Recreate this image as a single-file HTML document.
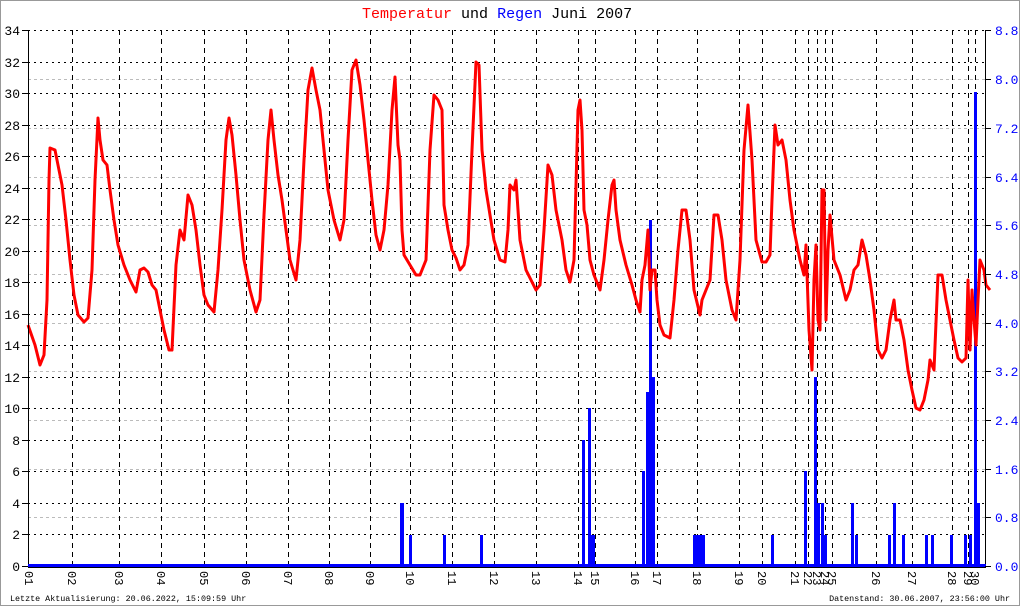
<!DOCTYPE html>
<html><head><meta charset="utf-8"><style>
html,body{margin:0;padding:0;background:#fff}
svg{display:block}
text{font-family:"Liberation Mono","DejaVu Sans Mono",monospace}
</style></head><body>
<svg width="1020" height="606" viewBox="0 0 1020 606" xmlns="http://www.w3.org/2000/svg">
<rect x="0.5" y="0.5" width="1019" height="605" fill="#fff" stroke="#999"/>
<text x="362" y="18" font-size="15" fill="#f00">Temperatur <tspan fill="#000">und</tspan> <tspan fill="#00f">Regen</tspan> <tspan fill="#000">Juni 2007</tspan></text>
<!-- gray rain grid -->
<g stroke="#bbb" stroke-dasharray="3,3" stroke-width="1">
<line x1="28" x2="985" y1="517.5" y2="517.5"/><line x1="28" x2="985" y1="469.5" y2="469.5"/><line x1="28" x2="985" y1="420.5" y2="420.5"/><line x1="28" x2="985" y1="371.5" y2="371.5"/><line x1="28" x2="985" y1="323.5" y2="323.5"/><line x1="28" x2="985" y1="274.5" y2="274.5"/><line x1="28" x2="985" y1="225.5" y2="225.5"/><line x1="28" x2="985" y1="177.5" y2="177.5"/><line x1="28" x2="985" y1="128.5" y2="128.5"/><line x1="28" x2="985" y1="79.5" y2="79.5"/>
</g>
<!-- black horizontal grid -->
<g stroke="#000" stroke-dasharray="2,4" stroke-width="1">
<line x1="28" x2="985" y1="30.5" y2="30.5"/><line x1="28" x2="985" y1="62.5" y2="62.5"/><line x1="28" x2="985" y1="93.5" y2="93.5"/><line x1="28" x2="985" y1="125.5" y2="125.5"/><line x1="28" x2="985" y1="156.5" y2="156.5"/><line x1="28" x2="985" y1="188.5" y2="188.5"/><line x1="28" x2="985" y1="219.5" y2="219.5"/><line x1="28" x2="985" y1="251.5" y2="251.5"/><line x1="28" x2="985" y1="282.5" y2="282.5"/><line x1="28" x2="985" y1="314.5" y2="314.5"/><line x1="28" x2="985" y1="345.5" y2="345.5"/><line x1="28" x2="985" y1="377.5" y2="377.5"/><line x1="28" x2="985" y1="408.5" y2="408.5"/><line x1="28" x2="985" y1="440.5" y2="440.5"/><line x1="28" x2="985" y1="471.5" y2="471.5"/><line x1="28" x2="985" y1="503.5" y2="503.5"/><line x1="28" x2="985" y1="534.5" y2="534.5"/>
</g>
<!-- vertical grid -->
<g stroke="#000" stroke-dasharray="5,4" stroke-width="1">
<line y1="30" y2="566" x1="72.5" x2="72.5"/><line y1="30" y2="566" x1="119.5" x2="119.5"/><line y1="30" y2="566" x1="161.5" x2="161.5"/><line y1="30" y2="566" x1="204.5" x2="204.5"/><line y1="30" y2="566" x1="246.5" x2="246.5"/><line y1="30" y2="566" x1="288.5" x2="288.5"/><line y1="30" y2="566" x1="329.5" x2="329.5"/><line y1="30" y2="566" x1="370.5" x2="370.5"/><line y1="30" y2="566" x1="410.5" x2="410.5"/><line y1="30" y2="566" x1="452.5" x2="452.5"/><line y1="30" y2="566" x1="494.5" x2="494.5"/><line y1="30" y2="566" x1="536.5" x2="536.5"/><line y1="30" y2="566" x1="578.5" x2="578.5"/><line y1="30" y2="566" x1="595.5" x2="595.5"/><line y1="30" y2="566" x1="635.5" x2="635.5"/><line y1="30" y2="566" x1="657.5" x2="657.5"/><line y1="30" y2="566" x1="697.5" x2="697.5"/><line y1="30" y2="566" x1="739.5" x2="739.5"/><line y1="30" y2="566" x1="762.5" x2="762.5"/><line y1="30" y2="566" x1="795.5" x2="795.5"/><line y1="30" y2="566" x1="808.5" x2="808.5"/><line y1="30" y2="566" x1="817.5" x2="817.5"/><line y1="30" y2="566" x1="825.5" x2="825.5"/><line y1="30" y2="566" x1="832.5" x2="832.5"/><line y1="30" y2="566" x1="876.5" x2="876.5"/><line y1="30" y2="566" x1="912.5" x2="912.5"/><line y1="30" y2="566" x1="952.5" x2="952.5"/><line y1="30" y2="566" x1="968.5" x2="968.5"/><line y1="30" y2="566" x1="975.5" x2="975.5"/>
</g>
<!-- rain bars -->
<g fill="#00f">
<rect x="400" y="503" width="4" height="63"/><rect x="409" y="535" width="3" height="31"/><rect x="443" y="535" width="3" height="31"/><rect x="480" y="535" width="3" height="31"/>
<rect x="582" y="440" width="3" height="126"/><rect x="588" y="408" width="3" height="158"/><rect x="591" y="535" width="4" height="31"/>
<rect x="642" y="471" width="3" height="95"/><rect x="646" y="392" width="3" height="174"/><rect x="649" y="220" width="3" height="346"/><rect x="652" y="377" width="3" height="189"/>
<rect x="693" y="535" width="12" height="31"/><rect x="771" y="535" width="3" height="31"/>
<rect x="804" y="471" width="3" height="95"/><rect x="814" y="377" width="3" height="189"/><rect x="817" y="503" width="3" height="63"/><rect x="821" y="503" width="3" height="63"/><rect x="824" y="535" width="3" height="31"/>
<rect x="851" y="503" width="3" height="63"/><rect x="855" y="535" width="3" height="31"/><rect x="888" y="535" width="3" height="31"/><rect x="893" y="503" width="3" height="63"/><rect x="902" y="535" width="3" height="31"/>
<rect x="925" y="535" width="3" height="31"/><rect x="931" y="535" width="3" height="31"/><rect x="950" y="535" width="3" height="31"/><rect x="964" y="535" width="3" height="31"/><rect x="969" y="535" width="3" height="31"/><rect x="974" y="92" width="3" height="474"/><rect x="977" y="503" width="3" height="63"/>
</g>
<!-- temperature -->
<polyline fill="none" stroke="#f00" stroke-width="3" stroke-linejoin="round" points="28,325 35,345 40,365 44,355 47,300 49,180 50,148 55,150 58,165 62,185 66,220 70,260 74,295 78,315 84,322 88,318 92,270 95,180 98,118 100,140 103,160 107,165 110,190 114,220 118,245 124,265 130,280 136,292 140,270 144,268 148,272 152,285 156,290 160,310 164,330 169,350 172,350 176,265 180,230 184,240 188,195 192,205 196,230 200,265 204,295 208,305 214,312 218,270 222,210 226,140 229,118 232,135 236,175 240,220 244,260 250,290 256,312 260,300 264,215 268,140 271,110 274,140 278,175 282,200 286,230 290,260 296,280 300,240 304,160 308,90 312,68 316,90 320,110 324,150 328,190 334,220 340,240 344,220 348,140 352,70 356,60 360,85 364,120 368,160 372,200 376,235 380,250 384,230 388,185 392,110 395,77 398,145 400,160 402,230 404,255 410,265 416,275 420,275 426,260 430,150 434,95 438,100 442,110 444,205 448,230 452,250 456,258 460,270 464,265 468,245 472,150 476,62 479,65 482,150 486,190 490,215 494,240 500,260 505,262 508,230 510,185 514,190 516,180 520,240 526,270 532,282 536,290 540,285 544,230 548,165 552,175 556,210 562,240 566,270 570,282 574,260 578,110 580,100 582,130 584,210 587,225 590,260 594,275 600,290 604,260 608,220 612,185 614,180 616,210 620,240 626,265 632,285 636,300 640,312 642,280 645,265 648,230 650,290 652,270 655,270 657,300 660,325 664,335 670,338 674,300 678,250 682,210 686,210 690,240 694,290 700,315 702,300 706,290 710,280 714,215 718,215 722,240 726,280 732,310 736,320 740,260 744,150 748,105 752,160 756,240 762,262 766,262 770,255 772,200 775,125 778,145 782,140 786,160 790,200 794,230 800,260 804,275 806,245 809,330 812,370 814,280 816,245 818,320 820,330 822,190 824,190 826,320 828,250 830,215 834,260 840,275 846,300 850,290 854,270 858,265 862,240 866,255 870,280 874,310 878,350 882,358 886,350 890,320 894,300 896,320 900,320 904,340 908,370 912,390 916,408 920,410 924,400 928,380 930,360 934,370 938,275 942,275 946,300 950,320 954,340 958,358 962,362 966,358 968,280 970,350 972,290 974,320 976,345 978,300 980,260 984,270 986,285 990,290"/>
<!-- axes -->
<line x1="28.5" y1="30" x2="28.5" y2="566" stroke="#000"/>
<line x1="985.5" y1="30" x2="985.5" y2="566" stroke="#000"/>
<rect x="28" y="564" width="958" height="3" fill="#00f"/>
<line x1="28" y1="567.5" x2="986" y2="567.5" stroke="#000"/>
<g stroke="#000">
<line x1="22" x2="28" y1="30.5" y2="30.5"/><line x1="22" x2="28" y1="62.5" y2="62.5"/><line x1="22" x2="28" y1="93.5" y2="93.5"/><line x1="22" x2="28" y1="125.5" y2="125.5"/><line x1="22" x2="28" y1="156.5" y2="156.5"/><line x1="22" x2="28" y1="188.5" y2="188.5"/><line x1="22" x2="28" y1="219.5" y2="219.5"/><line x1="22" x2="28" y1="251.5" y2="251.5"/><line x1="22" x2="28" y1="282.5" y2="282.5"/><line x1="22" x2="28" y1="314.5" y2="314.5"/><line x1="22" x2="28" y1="345.5" y2="345.5"/><line x1="22" x2="28" y1="377.5" y2="377.5"/><line x1="22" x2="28" y1="408.5" y2="408.5"/><line x1="22" x2="28" y1="440.5" y2="440.5"/><line x1="22" x2="28" y1="471.5" y2="471.5"/><line x1="22" x2="28" y1="503.5" y2="503.5"/><line x1="22" x2="28" y1="534.5" y2="534.5"/><line x1="22" x2="28" y1="566.5" y2="566.5"/>
<line x1="985" x2="991" y1="30.5" y2="30.5"/><line x1="985" x2="991" y1="79.5" y2="79.5"/><line x1="985" x2="991" y1="128.5" y2="128.5"/><line x1="985" x2="991" y1="177.5" y2="177.5"/><line x1="985" x2="991" y1="225.5" y2="225.5"/><line x1="985" x2="991" y1="274.5" y2="274.5"/><line x1="985" x2="991" y1="323.5" y2="323.5"/><line x1="985" x2="991" y1="371.5" y2="371.5"/><line x1="985" x2="991" y1="420.5" y2="420.5"/><line x1="985" x2="991" y1="469.5" y2="469.5"/><line x1="985" x2="991" y1="517.5" y2="517.5"/><line x1="985" x2="991" y1="566.5" y2="566.5"/>
</g>
<g font-size="13" fill="#000" text-anchor="end">
<text x="20" y="35">34</text><text x="20" y="67">32</text><text x="20" y="98">30</text><text x="20" y="130">28</text><text x="20" y="161">26</text><text x="20" y="193">24</text><text x="20" y="224">22</text><text x="20" y="256">20</text><text x="20" y="287">18</text><text x="20" y="319">16</text><text x="20" y="350">14</text><text x="20" y="382">12</text><text x="20" y="413">10</text><text x="20" y="445">8</text><text x="20" y="476">6</text><text x="20" y="508">4</text><text x="20" y="539">2</text><text x="20" y="571">0</text>
</g>
<g font-size="13" fill="#00f">
<text x="995" y="35">8.8</text><text x="995" y="84">8.0</text><text x="995" y="133">7.2</text><text x="995" y="182">6.4</text><text x="995" y="230">5.6</text><text x="995" y="279">4.8</text><text x="995" y="328">4.0</text><text x="995" y="376">3.2</text><text x="995" y="425">2.4</text><text x="995" y="474">1.6</text><text x="995" y="522">0.8</text><text x="995" y="571">0.0</text>
</g>
<g font-size="12" fill="#000">
<text transform="translate(25,571) rotate(90)">01</text>
<text transform="translate(68,571) rotate(90)">02</text>
<text transform="translate(115,571) rotate(90)">03</text>
<text transform="translate(157,571) rotate(90)">04</text>
<text transform="translate(200,571) rotate(90)">05</text>
<text transform="translate(242,571) rotate(90)">06</text>
<text transform="translate(284,571) rotate(90)">07</text>
<text transform="translate(325,571) rotate(90)">08</text>
<text transform="translate(366,571) rotate(90)">09</text>
<text transform="translate(406,571) rotate(90)">10</text>
<text transform="translate(448,571) rotate(90)">11</text>
<text transform="translate(490,571) rotate(90)">12</text>
<text transform="translate(532,571) rotate(90)">13</text>
<text transform="translate(574,571) rotate(90)">14</text>
<text transform="translate(591,571) rotate(90)">15</text>
<text transform="translate(631,571) rotate(90)">16</text>
<text transform="translate(653,571) rotate(90)">17</text>
<text transform="translate(693,571) rotate(90)">18</text>
<text transform="translate(735,571) rotate(90)">19</text>
<text transform="translate(758,571) rotate(90)">20</text>
<text transform="translate(791,571) rotate(90)">21</text>
<text transform="translate(804,571) rotate(90)">22</text>
<text transform="translate(813,571) rotate(90)">23</text>
<text transform="translate(821,571) rotate(90)">24</text>
<text transform="translate(828,571) rotate(90)">25</text>
<text transform="translate(872,571) rotate(90)">26</text>
<text transform="translate(908,571) rotate(90)">27</text>
<text transform="translate(948,571) rotate(90)">28</text>
<text transform="translate(964,571) rotate(90)">29</text>
<text transform="translate(971,571) rotate(90)">30</text>
</g>
<text x="10" y="601" font-size="8.4" fill="#000">Letzte Aktualisierung: 20.06.2022, 15:09:59 Uhr</text>
<text x="1010" y="601" font-size="8.4" fill="#000" text-anchor="end">Datenstand: 30.06.2007, 23:56:00 Uhr</text>
</svg>
</body></html>
